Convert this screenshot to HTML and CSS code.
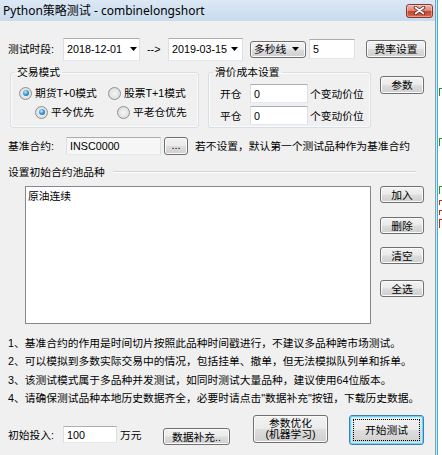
FILE: index.html
```html
<!DOCTYPE html>
<html>
<head>
<meta charset="utf-8">
<title>Python策略测试</title>
<link rel="stylesheet" href="styles.css">
</head>
<body>
<div class="screen">
  <div class="win">
    <div class="titlebar">
      <span class="title">Python策略测试 - combinelongshort</span>
      <div class="close">
        <svg width="13" height="9" viewBox="0 0 13 9"><path d="M2.5 1.5 L10.5 7.5 M10.5 1.5 L2.5 7.5" stroke="#5a1a14" stroke-width="3.4" stroke-linecap="round"/><path d="M2.5 1.5 L10.5 7.5 M10.5 1.5 L2.5 7.5" stroke="#fff" stroke-width="1.8" stroke-linecap="round"/></svg>
      </div>
    </div>
    <div class="client">
      <div class="row r-period">
        <span class="lbl w55">测试时段:</span>
        <div class="edit date d1"><span>2018-12-01</span><svg class="tri" width="7" height="4" viewBox="0 0 7 4"><path d="M0 0H7L3.5 4Z" fill="#000"/></svg></div>
        <span class="arrow">--&gt;</span>
        <div class="edit date d2"><span>2019-03-15</span><svg class="tri" width="7" height="4" viewBox="0 0 7 4"><path d="M0 0H7L3.5 4Z" fill="#000"/></svg></div>
        <div class="btn combo"><span>多秒线</span><svg class="tri" width="7" height="4" viewBox="0 0 7 4"><path d="M0 0H7L3.5 4Z" fill="#000"/></svg></div>
        <div class="edit e5">5</div>
        <div class="btn b-fee">费率设置</div>
      </div>

      <div class="row r-groups">
        <fieldset class="grp g-mode">
          <legend>交易模式</legend>
          <div class="radios rr1">
            <span class="radio on w89"><i></i>期货T+0模式</span>
            <span class="radio"><i></i>股票T+1模式</span>
          </div>
          <div class="radios rr2">
            <span class="radio on w82"><i></i>平今优先</span>
            <span class="radio"><i></i>平老仓优先</span>
          </div>
        </fieldset>
        <fieldset class="grp g-slip">
          <legend>滑价成本设置</legend>
          <div class="slip s1"><span class="w30">开仓</span><div class="edit e-slip">0</div><span class="unit">个变动价位</span></div>
          <div class="slip s2"><span class="w30">平仓</span><div class="edit e-slip">0</div><span class="unit">个变动价位</span></div>
        </fieldset>
        <div class="btn b-param">参数</div>
      </div>

      <div class="row r-base">
        <span class="lbl w58">基准合约:</span>
        <div class="edit e-base">INSC0000</div>
        <div class="btn b-dots">...</div>
        <span class="hint">若不设置，默认第一个测试品种作为基准合约</span>
      </div>

      <div class="row r-sep">
        <span class="lbl">设置初始合约池品种</span>
        <span class="sepline"></span>
      </div>

      <div class="row r-list">
        <div class="listbox"><div class="item">原油连续</div></div>
        <div class="sidebtns">
          <div class="btn sb sb1">加入</div>
          <div class="btn sb sb2">删除</div>
          <div class="btn sb sb3">清空</div>
          <div class="btn sb sb4">全选</div>
        </div>
      </div>

      <div class="notes">
        <p>1、基准合约的作用是时间切片按照此品种时间戳进行，不建议多品种跨市场测试。</p>
        <p>2、可以模拟到多数实际交易中的情况，包括挂单、撤单，但无法模拟队列单和拆单。</p>
        <p>3、该测试模式属于多品种并发测试，如同时测试大量品种，建议使用64位版本。</p>
        <p>4、请确保测试品种本地历史数据齐全，必要时请点击"数据补充"按钮，下载历史数据。</p>
      </div>

      <div class="row r-bottom">
        <span class="lbl w55 bl">初始投入:</span>
        <div class="edit e-cap">100</div>
        <span class="lbl wan">万元</span>
        <div class="btn b-data">数据补充..</div>
        <div class="btn b-opt">参数优化<br>(机器学习)</div>
        <div class="btn b-start"><span class="focus">开始测试</span></div>
      </div>
    </div>
  </div>
  <div class="behind">
    <span class="frag g f1"></span>
    <span class="frag g f2"></span>
    <span class="frag g f3"></span>
    <span class="frag r f4"></span>
    <span class="frag r f5"></span>
    <span class="frag r f6"></span>
  </div>
</div>
</body>
</html>
```

FILE: styles.css
```css
* { box-sizing: border-box; }
html, body { margin: 0; padding: 0; }
body {
  width: 442px;
  height: 455px;
  overflow: hidden;
  background: #fff;
  color: #000;
  font-family: "Liberation Sans", "Noto Sans CJK SC", sans-serif;
  font-size: 10.75px;
  line-height: 14px;
}
.screen { display: flex; width: 442px; height: 455px; }
.win {
  width: 436px;
  height: 455px;
  flex: none;
  background: #f0f0f0;
  border-right: 1px solid #8d9db0;
  display: flex;
  flex-direction: column;
}
.titlebar {
  height: 21px;
  flex: none;
  display: flex;
  align-items: center;
  padding-left: 3px;
  background: linear-gradient(#dce8f5, #c9dbee);
}
.title {
  flex: 1;
  font-family: "Noto Sans", "Noto Sans CJK SC", sans-serif;
  font-size: 12px;
  line-height: 14px;
}
.close {
  width: 27px;
  height: 14px;
  margin-right: 2px;
  border: 1px solid #83372d;
  border-radius: 3px;
  background: linear-gradient(#edb8ad 0%, #dc8877 45%, #c8432f 55%, #d86a52 100%);
  box-shadow: inset 0 0 0 1px rgba(255,255,255,0.35);
  display: flex;
  align-items: center;
  justify-content: center;
}
.client { flex: 1; display: flex; flex-direction: column; }
.row { display: flex; align-items: center; flex: none; }
.lbl { flex: none; white-space: nowrap; }
.w55 { width: 55px; margin-left: 8px; }
.w58 { width: 58px; margin-left: 8px; }

.edit {
  flex: none;
  display: flex;
  align-items: center;
  padding-left: 3px;
  background: #fff;
  border: 1px solid;
  border-color: #abadb3 #dbdfe6 #e3e9ef #dbdfe6;
  white-space: nowrap;
}
.btn {
  flex: none;
  display: flex;
  align-items: center;
  justify-content: center;
  border: 1px solid #707070;
  border-radius: 3px;
  background: linear-gradient(#f2f2f2 0%, #ebebeb 48%, #dddddd 52%, #cfcfcf 100%);
  box-shadow: inset 0 0 0 1px #fbfbfb;
  white-space: nowrap;
}
.tri { flex: none; margin-left: auto; }

/* row 1 */
.r-period { margin-top: 16px; height: 24px; }
.date { height: 23px; }
.d1 { width: 77px; }
.d1 .tri { margin-right: 2px; }
.d2 { width: 75px; }
.d2 .tri { margin-right: 4px; }
.arrow { width: 21px; margin-left: 7px; flex: none; }
.combo { width: 56px; height: 17px; margin-left: 7px; justify-content: flex-start; padding-left: 3px; }
.combo .tri { margin-right: 6px; }
.e5 { width: 46px; height: 20px; margin-left: 3px; }
.b-fee { width: 60px; height: 18px; margin-left: 11px; }

/* groups */
.r-groups { margin-top: 4px; align-items: flex-start; }
.grp {
  margin: 0;
  padding: 0 4px;
  height: 63px;
  border: 1px solid #d5dfe5;
  border-radius: 3px;
  box-shadow: inset 0 0 0 1px #fbfbfb;
  flex: none;
}
.grp legend { padding: 0 2px; line-height: 14px; }
.g-mode { margin-left: 10px; width: 189px; }
.g-slip { margin-left: 9px; width: 163px; }
.b-param { width: 44px; height: 18px; margin-left: 9px; margin-top: 11px; }

.radios { display: flex; height: 14px; align-items: center; }
.rr1 { margin-top: 7px; margin-left: 4px; }
.rr2 { margin-top: 5px; margin-left: 20px; }
.radio { display: flex; align-items: center; flex: none; white-space: nowrap; }
.w89 { width: 89px; }
.w82 { width: 82px; }
.radio i {
  width: 13px;
  height: 13px;
  border-radius: 50%;
  border: 1px solid #8f9091;
  background: radial-gradient(circle at 50% 50%, #f6f6f6 0%, #e2e2e2 60%, #d0d0d0 100%);
  margin-right: 3px;
  display: flex;
  align-items: center;
  justify-content: center;
  flex: none;
}
.radio.on i::after {
  content: "";
  width: 6px;
  height: 6px;
  border-radius: 50%;
  background: radial-gradient(circle at 40% 35%, #c4ecff 0%, #3ba0dc 45%, #10508a 100%);
}

.slip { display: flex; align-items: center; height: 19px; margin-left: 7px; }
.s1 { margin-top: 5px; }
.s2 { margin-top: 3px; }
.w30 { width: 30px; flex: none; }
.e-slip { width: 58px; height: 19px; }
.unit { margin-left: 2px; white-space: nowrap; }

/* base contract */
.r-base { margin-top: 9px; height: 18px; }
.e-base { width: 95px; height: 18px; background: #f6f6f6; }
.b-dots { width: 24px; height: 18px; margin-left: 3px; padding-bottom: 3px; }
.hint { margin-left: 7px; white-space: nowrap; }

/* separator */
.r-sep { margin-top: 10px; height: 14px; }
.r-sep .lbl { margin-left: 8px; }
.sepline {
  flex: none;
  width: 303px;
  margin-left: 8px;
  height: 2px;
  border-top: 1px solid #d5d5d5;
  border-bottom: 1px solid #fff;
}

/* list */
.r-list { margin-top: 7px; align-items: flex-start; }
.listbox {
  margin-left: 25px;
  width: 346px;
  height: 138px;
  background: #fff;
  border: 1px solid #828790;
  padding: 2px 2px;
  flex: none;
}
.sidebtns { margin-left: 9px; display: flex; flex-direction: column; }
.sb { width: 44px; height: 17px; }
.sb2 { margin-top: 14px; }
.sb3 { margin-top: 13px; }
.sb4 { margin-top: 16px; }

/* notes */
.notes { margin-top: 10px; padding-left: 8px; }
.notes p { margin: 0; line-height: 18.3px; white-space: nowrap; }

/* bottom */
.r-bottom { margin-top: 8px; height: 30px; align-items: flex-start; }
.bl { margin-top: 13px; }
.e-cap { width: 54px; height: 17px; margin-top: 11px; }
.wan { width: 22px; margin-left: 3px; margin-top: 13px; }
.b-data { width: 67px; height: 17px; margin-left: 21px; margin-top: 13px; }
.b-opt { width: 75px; height: 28px; margin-left: 23px; line-height: 11px; text-align: center; }
.b-start {
  width: 75px;
  height: 30px;
  margin-left: 21px;
  border-color: #3c7fb1;
  box-shadow: inset 0 0 0 1px #6fd3f5, inset 0 0 0 2px #bfeafb;
  padding: 3px;
  align-items: stretch;
}
.focus {
  flex: 1;
  display: flex;
  align-items: center;
  justify-content: center;
  border: 1px dotted #000;
}

/* window behind */
.behind {
  flex: 1;
  background: #fff;
  border-left: 1px solid #e4e4e4;
  box-shadow: inset 1px 0 0 #1fc0e8;
  overflow: hidden;
  display: flex;
  flex-direction: column;
}
.frag { display: block; margin-left: 2px; width: 3px; height: 8px; border-left: 1px solid; border-top: 1px solid; }
.g { color: #1f9a2a; }
.r { color: #d2241c; }
.f1 { margin-top: 88px; }
.f2 { margin-top: 42px; }
.f3 { margin-top: 40px; }
.f4 { margin-top: 6px; height: 5px; }
.f5 { margin-top: 5px; height: 5px; }
.f6 { margin-top: 4px; height: 9px; }
```
